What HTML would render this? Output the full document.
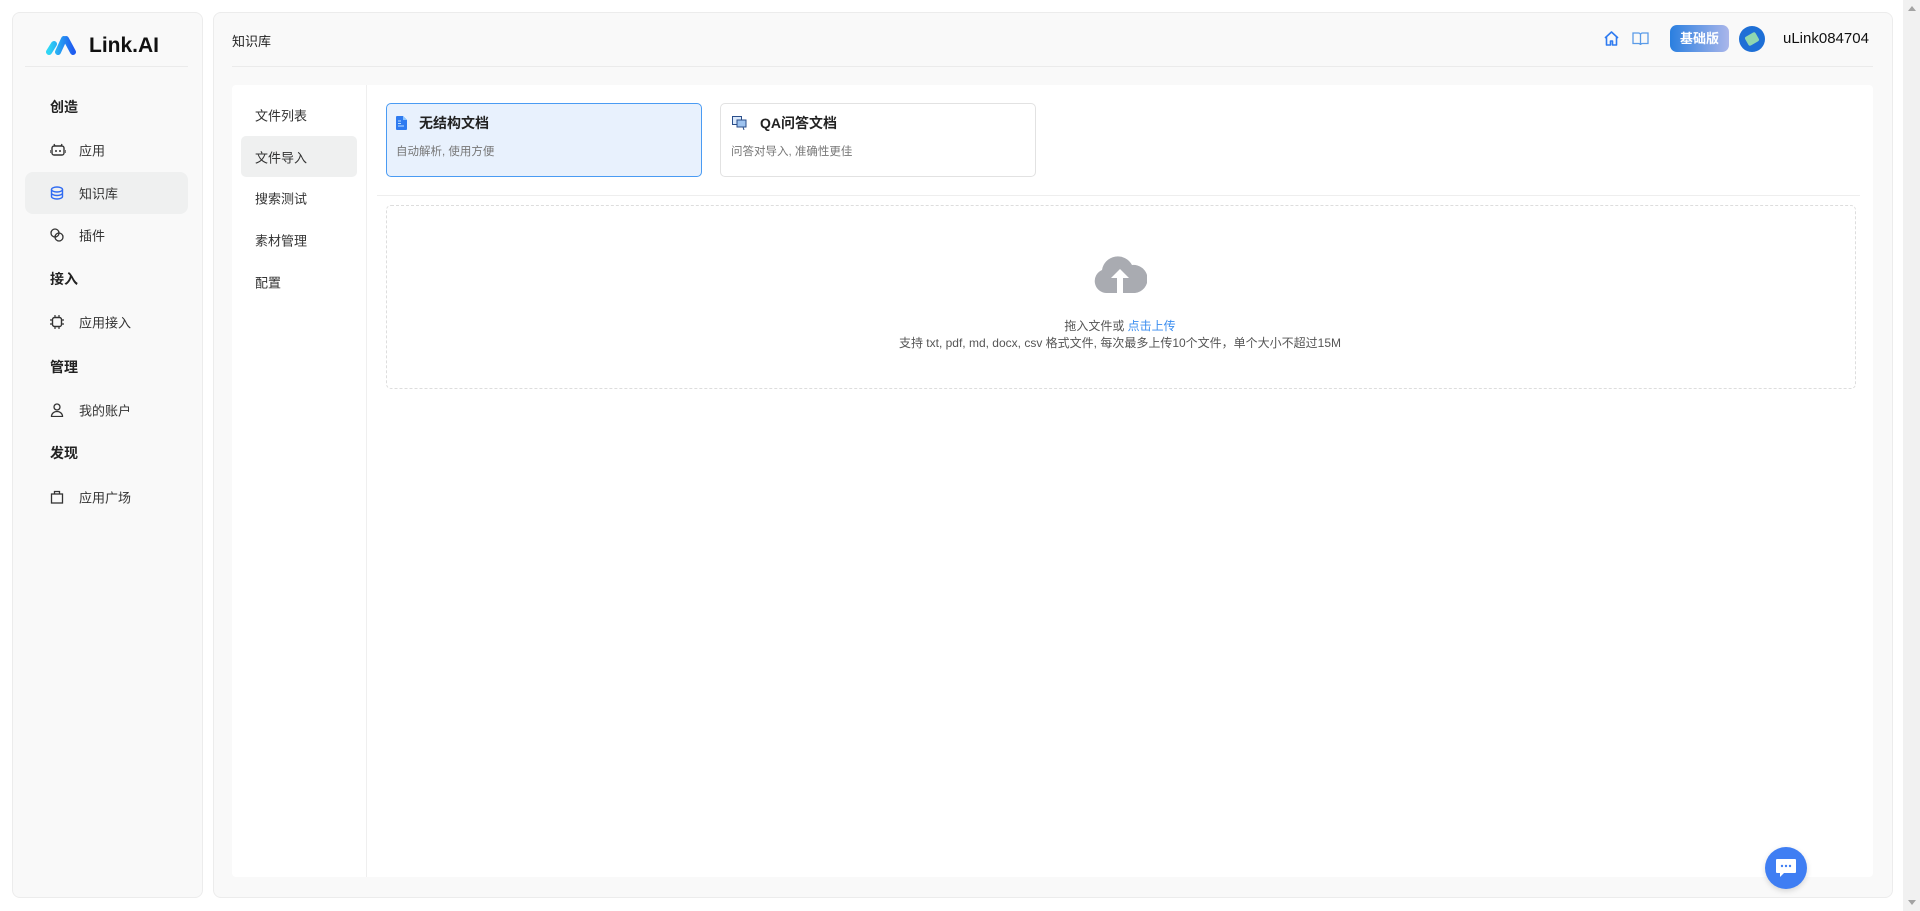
<!DOCTYPE html>
<html><head><meta charset="utf-8"><style>
*{box-sizing:border-box;margin:0;padding:0}
body{width:1920px;height:911px;background:#fff;font-family:"Liberation Sans","Noto Sans CJK SC",sans-serif;color:#222;position:relative;overflow:hidden}
.abs{position:absolute}
.side{left:12px;top:12px;width:191px;height:886px;background:#f9f9f9;border:1px solid #ececec;border-radius:8px}
.main{left:213px;top:12px;width:1680px;height:886px;background:#f9f9f9;border:1px solid #ececec;border-radius:8px}
.sec{position:absolute;left:50px;font-size:14px;font-weight:bold;color:#222;transform:translateY(-50%)}
.it{position:absolute;left:79px;font-size:13px;color:#333;transform:translateY(-50%)}
.ic{position:absolute;left:50px;transform:translateY(-50%)}
.mi{position:absolute;left:255px;font-size:13px;color:#333;transform:translateY(-50%)}
.scroll{left:1903px;top:0;width:17px;height:911px;background:#f1f1f1}
</style></head><body>
<div class="abs side"></div>
<div class="abs main"></div>
<div class="abs scroll"></div>
<svg class="abs" style="left:1908px;top:6px" width="8" height="5"><path d="M0 5L4 0L8 5Z" fill="#a3a3a3"/></svg>
<svg class="abs" style="left:1908px;top:900px" width="8" height="5"><path d="M0 0L4 5L8 0Z" fill="#a3a3a3"/></svg>

<!-- logo -->
<svg class="abs" style="left:46px;top:35px" width="31" height="21" viewBox="0 0 31 21"><defs><linearGradient id="lg" x1="0" x2="1"><stop offset="0" stop-color="#2fd6f5"/><stop offset="1" stop-color="#1f5cf0"/></linearGradient></defs><path d="M3 17L8 9M12 17L18 4M20 4L27 17" stroke="url(#lg)" stroke-width="6" stroke-linecap="round" fill="none"/></svg>
<div class="abs" style="left:89px;top:34px;font-size:21px;font-weight:bold;color:#111">Link.AI</div>
<div class="abs" style="left:25px;top:66px;width:163px;height:1px;background:#ebebeb"></div>

<div class="abs" style="left:25px;top:172px;width:163px;height:42px;background:#eff0f0;border-radius:8px"></div>
<div class="sec" style="top:107px">创造</div>
<svg class="ic" style="top:150px" width="16" height="14" viewBox="0 0 16 14"><rect x="2" y="3" width="12" height="9" rx="2" fill="none" stroke="#333" stroke-width="1.4"/><circle cx="6" cy="8" r="1" fill="#333"/><circle cx="10" cy="8" r="1" fill="#333"/><path d="M5 3L4 1M11 3L12 1M0 7v3M16 7v3" stroke="#333" stroke-width="1.3"/></svg>
<div class="it" style="top:150px">应用</div>
<svg class="ic" style="top:193px" width="14" height="14" viewBox="0 0 14 14"><ellipse cx="7" cy="3.5" rx="5.5" ry="2.5" fill="none" stroke="#2f6bf2" stroke-width="1.4"/><path d="M1.5 3.5v7c0 1.4 2.5 2.5 5.5 2.5s5.5-1.1 5.5-2.5v-7M1.5 7c0 1.4 2.5 2.5 5.5 2.5s5.5-1.1 5.5-2.5" fill="none" stroke="#2f6bf2" stroke-width="1.4"/></svg>
<div class="it" style="top:193px">知识库</div>
<svg class="ic" style="top:235px" width="14" height="14" viewBox="0 0 14 14"><circle cx="5" cy="5" r="4" fill="none" stroke="#333" stroke-width="1.3"/><circle cx="9" cy="9" r="4" fill="none" stroke="#333" stroke-width="1.3"/></svg>
<div class="it" style="top:235px">插件</div>
<div class="sec" style="top:279px">接入</div>
<svg class="ic" style="top:322px" width="14" height="14" viewBox="0 0 14 14"><rect x="2.5" y="2.5" width="9" height="9" rx="2" fill="none" stroke="#333" stroke-width="1.4"/><path d="M5 0v2.5M9 0v2.5M5 11.5V14M9 11.5V14M0 5h2.5M0 9h2.5M11.5 5H14M11.5 9H14" stroke="#333" stroke-width="1.2"/></svg>
<div class="it" style="top:322px">应用接入</div>
<div class="sec" style="top:367px">管理</div>
<svg class="ic" style="top:410px" width="14" height="14" viewBox="0 0 14 14"><circle cx="7" cy="4" r="3" fill="none" stroke="#333" stroke-width="1.3"/><path d="M1.5 13.5c0-3 2.5-5 5.5-5s5.5 2 5.5 5z" fill="none" stroke="#333" stroke-width="1.3"/></svg>
<div class="it" style="top:410px">我的账户</div>
<div class="sec" style="top:453px">发现</div>
<svg class="ic" style="top:497px" width="14" height="14" viewBox="0 0 14 14"><rect x="1.5" y="4" width="11" height="9" fill="none" stroke="#333" stroke-width="1.3"/><path d="M4.5 4V1.5h5V4" fill="none" stroke="#333" stroke-width="1.3"/></svg>
<div class="it" style="top:497px">应用广场</div>

<!-- main header -->
<div class="abs" style="left:232px;top:31px;font-size:13px;color:#222">知识库</div>
<div class="abs" style="left:232px;top:66px;width:1641px;height:1px;background:#ebebeb"></div>
<svg class="abs" style="left:1603px;top:30px" width="17" height="17" viewBox="0 0 17 17"><path d="M2 8L8.5 2L15 8M3.5 7v8h4v-4h2v4h4V7" fill="none" stroke="#2f7bf0" stroke-width="1.6" stroke-linejoin="round"/></svg>
<svg class="abs" style="left:1632px;top:31px" width="17" height="15" viewBox="0 0 17 15"><path d="M1 2h5.5c1 0 2 .8 2 2v10c0-1-1-1.5-2-1.5H1zM16 2h-5.5c-1 0-2 .8-2 2v10c0-1 1-1.5 2-1.5H16z" fill="none" stroke="#5a9be8" stroke-width="1.3"/></svg>
<div class="abs" style="left:1670px;top:25px;width:59px;height:27px;border-radius:7px;background:linear-gradient(90deg,#2a7fe0,#aab6ea);color:#fff;font-size:13px;font-weight:bold;text-align:center;line-height:27px">基础版</div>
<div class="abs" style="left:1739px;top:26px;width:26px;height:26px;border-radius:50%;background:#1e6fd6"><div style="position:absolute;left:7px;top:8px;width:12px;height:10px;background:#8fd7b0;transform:rotate(-30deg);border-radius:2px"></div></div>
<div class="abs" style="left:1783px;top:30px;font-size:15px;color:#111">uLink084704</div>

<!-- inner panel -->
<div class="abs" style="left:232px;top:85px;width:1641px;height:792px;background:#fff;border-radius:4px"></div>
<div class="abs" style="left:366px;top:85px;width:1px;height:792px;background:#efefef"></div>
<div class="abs" style="left:241px;top:136px;width:116px;height:41px;background:#eff0f0;border-radius:5px"></div>
<div class="mi" style="top:115px">文件列表</div>
<div class="mi" style="top:157px">文件导入</div>
<div class="mi" style="top:198px">搜索测试</div>
<div class="mi" style="top:240px">素材管理</div>
<div class="mi" style="top:282px">配置</div>

<div class="abs" style="left:386px;top:103px;width:316px;height:74px;background:#e8f1fd;border:1px solid #4a9bf3;border-radius:5px"></div>
<svg class="abs" style="left:396px;top:116px" width="11" height="14" viewBox="0 0 11 14"><path d="M0 1a1 1 0 011-1h6l4 4v9a1 1 0 01-1 1H1a1 1 0 01-1-1z" fill="#2f7bf0"/><path d="M2 5h3M2 7.5h3M2 10h6" stroke="#bfe0ff" stroke-width="1"/><path d="M7 0v4h4z" fill="#8cc6ff"/></svg>
<div class="abs" style="left:419px;top:113px;font-size:14px;font-weight:bold;color:#222">无结构文档</div>
<div class="abs" style="left:396px;top:143px;font-size:11.5px;color:#777">自动解析, 使用方便</div>

<div class="abs" style="left:720px;top:103px;width:316px;height:74px;background:#fff;border:1px solid #e2e2e2;border-radius:5px"></div>
<svg class="abs" style="left:732px;top:116px" width="15" height="14" viewBox="0 0 15 14"><rect x="0.5" y="0.5" width="9" height="8" fill="#dbe9fb" stroke="#2a4e8a"/><rect x="5" y="4" width="9" height="7" fill="#9ec3ef" stroke="#2a4e8a"/><path d="M11 11l1 3" stroke="#2a4e8a"/></svg>
<div class="abs" style="left:760px;top:113px;font-size:14px;font-weight:bold;color:#222">QA问答文档</div>
<div class="abs" style="left:731px;top:143px;font-size:11.5px;color:#777">问答对导入, 准确性更佳</div>

<div class="abs" style="left:377px;top:195px;width:1483px;height:1px;background:#eee"></div>
<div class="abs" style="left:386px;top:205px;width:1470px;height:184px;border:1px dashed #ddd;border-radius:5px"></div>
<svg class="abs" style="left:1093px;top:253px" width="54" height="40" viewBox="0 0 54 40"><path d="M13 40A12 12 0 0 1 9 17A16 16 0 0 1 39 12A14 14 0 0 1 42 40Z" fill="#a9abb1"/><path d="M27 16L18 25h6v15h6V25h6z" fill="#fff"/></svg>
<div class="abs" style="left:0;width:2240px;top:317px;text-align:center;font-size:12px;color:#555">拖入文件或 <span style="color:#3b8ef0">点击上传</span></div>
<div class="abs" style="left:0;width:2240px;top:334px;text-align:center;font-size:12px;color:#555">支持 txt, pdf, md, docx, csv 格式文件, 每次最多上传10个文件，单个大小不超过15M</div>

<div class="abs" style="left:1765px;top:847px;width:42px;height:42px;border-radius:50%;background:#3f7ef3;box-shadow:0 2px 6px rgba(0,0,0,.15)"></div>
<svg class="abs" style="left:1776px;top:859px" width="20" height="19" viewBox="0 0 20 19"><path d="M0 1a1 1 0 011-1h18a1 1 0 011 1v12a1 1 0 01-1 1H8l-4 4v-4H1a1 1 0 01-1-1z" fill="#fff"/><circle cx="6" cy="7" r="1.2" fill="#3f7ef3"/><circle cx="10" cy="7" r="1.2" fill="#3f7ef3"/><circle cx="14" cy="7" r="1.2" fill="#3f7ef3"/></svg>
</body></html>
